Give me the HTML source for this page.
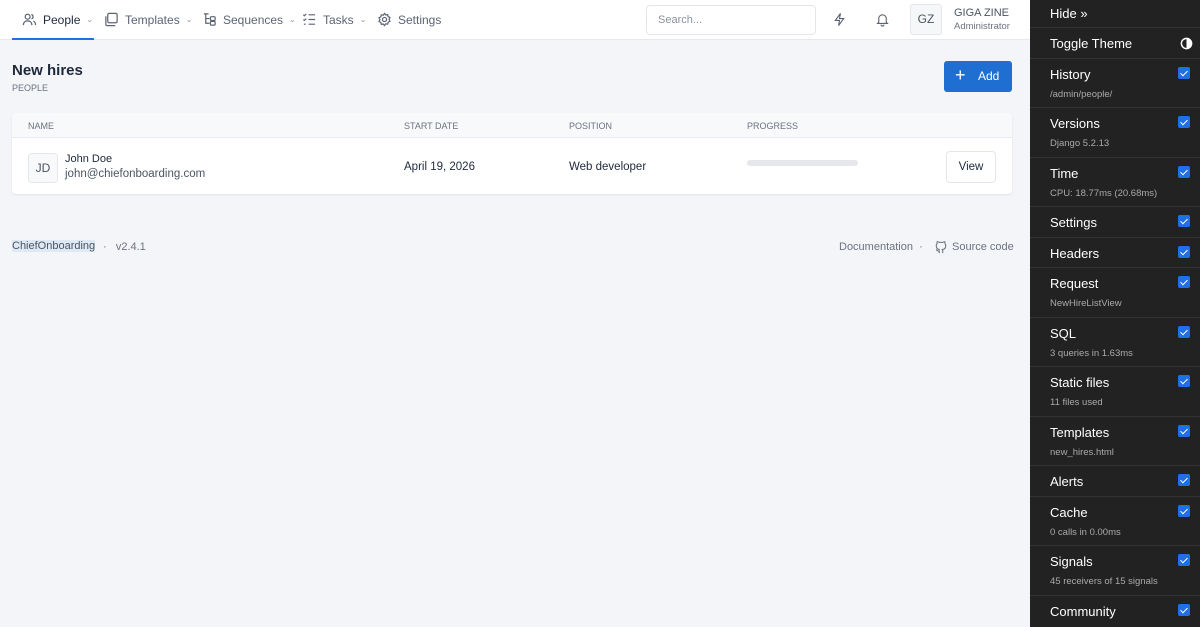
<!DOCTYPE html>
<html><head><meta charset="utf-8"><style>
*{box-sizing:border-box;margin:0;padding:0}
body{width:1200px;height:627px;overflow:hidden;background:#f4f5f9;font-family:"Liberation Sans",sans-serif;position:relative;color:#1e293b}
.nav{position:absolute;left:0;top:0;width:1030px;height:40px;background:#fff;border-bottom:1px solid #e6e8ee}
.ni{position:absolute;top:12px;font-size:12px;color:#5b6473;display:flex;align-items:center;gap:6px}
.ni svg{width:15px;height:15px;stroke:#5b6473;fill:none;stroke-width:1.3}
.car{font-size:8px;color:#8a93a0}
.abs{position:absolute}
.side{position:absolute;left:1030px;top:0;width:170px;height:627px;background:#222}
.row{position:absolute;left:0;width:170px;border-bottom:1px solid #333;color:#fff;font-size:13px}
.row .t{position:absolute;left:20px}
.row .s{position:absolute;left:20px;font-size:9.5px;color:#aaa}
.cb{position:absolute;right:10px;width:12px;height:12px;background:#1f6fe6;border-radius:2px}
.cb:after{content:"";position:absolute;left:3.5px;top:1.5px;width:3px;height:6px;border:solid #fff;border-width:0 1.6px 1.6px 0;transform:rotate(45deg)}
</style></head><body>
<div class="nav">
 <div class="ni" style="left:22px;color:#1e293b"><svg viewBox="0 0 16 16"><circle cx="6" cy="5" r="2.6"/><path d="M1.5 14c0-3 2-4.5 4.5-4.5S10.5 11 10.5 14M10 2.6a2.5 2.5 0 010 4.8M12 9.8c1.6.5 2.5 2 2.5 4.2"/></svg>People <span class="car">⌄</span></div>
 <div class="abs" style="left:12px;top:38px;width:82px;height:2px;background:#1f6fe6"></div>
 <div class="ni" style="left:104px"><svg viewBox="0 0 16 16"><rect x="4" y="1.5" width="10" height="10" rx="1.5"/><path d="M2 4.5v8.5a1.5 1.5 0 001.5 1.5H12"/></svg>Templates <span class="car">⌄</span></div>
 <div class="ni" style="left:202px"><svg viewBox="0 0 16 16"><path d="M2 2h5M4 2v10h4M4 7h4"/><rect x="9" y="5" width="5" height="4" rx="1"/><rect x="9" y="10" width="5" height="4" rx="1"/></svg>Sequences <span class="car">⌄</span></div>
 <div class="ni" style="left:302px"><svg viewBox="0 0 16 16"><path d="M1.5 3l1 1 2-2M1.5 8l1 1 2-2M2 13h2M7 3h7M7 8h7M7 13h7"/></svg>Tasks <span class="car">⌄</span></div>
 <div class="ni" style="left:377px"><svg viewBox="0 0 16 16"><circle cx="8" cy="8" r="2.2"/><path d="M8 1.5l1.3 1.7 2.1-.4.5 2.1 1.9 1-.9 2 .9 2-1.9 1-.5 2.1-2.1-.4L8 14.5l-1.3-1.7-2.1.4-.5-2.1-1.9-1 .9-2-.9-2 1.9-1 .5-2.1 2.1.4z"/></svg>Settings</div>
 <div class="abs" style="left:646px;top:5px;width:170px;height:30px;border:1px solid #e3e6eb;border-radius:4px;font-size:11px;color:#8a93a0;padding:8px 11px">Search...</div>
 <svg class="abs" style="left:832px;top:12px" width="15" height="15" viewBox="0 0 16 16" fill="none" stroke="#5b6473" stroke-width="1.2"><path d="M9 1.5L3.5 9h4.5l-1 5.5L12.5 7H8z"/></svg>
 <svg class="abs" style="left:875px;top:12px" width="15" height="15" viewBox="0 0 16 16" fill="none" stroke="#5b6473" stroke-width="1.2"><path d="M4 11V7a4 4 0 018 0v4l1.2 1.2H2.8zM6.5 13.5a1.5 1.5 0 003 0"/></svg>
 <div class="abs" style="left:910px;top:4px;width:32px;height:31px;border:1px solid #e3e6eb;border-radius:3px;background:#f6f7f9;font-size:12px;color:#4b5563;text-align:center;line-height:29px">GZ</div>
 <div class="abs" style="left:954px;top:7px;font-size:11px;color:#4b5563">GIGA ZINE</div>
 <div class="abs" style="left:954px;top:21px;font-size:9.5px;color:#6b7280">Administrator</div>
</div>
<div class="abs" style="left:12px;top:62px;font-size:15px;font-weight:bold;color:#1e293b">New hires</div>
<div class="abs" style="left:12px;top:83px;font-size:9px;color:#6b7280">PEOPLE</div>
<div class="abs" style="left:944px;top:61px;width:68px;height:31px;background:#1f6fd2;border-radius:3px;color:#fff;font-size:12px;line-height:31px"><span style="position:absolute;left:11px;font-size:18px;top:-1px">+</span><span style="position:absolute;left:34px">Add</span></div>
<div class="abs" style="left:12px;top:113px;width:1000px;height:81px;background:#fff;border-radius:4px;box-shadow:0 1px 2px rgba(0,0,0,.08)">
 <div class="abs" style="left:0;top:0;width:1000px;height:25px;background:#f8f9fb;border-bottom:1px solid #e9ecf0;border-radius:4px 4px 0 0;font-size:9px;color:#6b7280">
  <span class="abs" style="left:16px;top:8px">NAME</span><span class="abs" style="left:392px;top:8px">START DATE</span><span class="abs" style="left:557px;top:8px">POSITION</span><span class="abs" style="left:735px;top:8px">PROGRESS</span></div>
 <div class="abs" style="left:16px;top:40px;width:30px;height:30px;border:1px solid #e3e6eb;border-radius:4px;background:#f8f9fb;font-size:12px;color:#4b5563;text-align:center;line-height:28px">JD</div>
 <div class="abs" style="left:53px;top:40px;font-size:11px;color:#1e293b">John Doe</div>
 <div class="abs" style="left:53px;top:55px;font-size:11.5px;color:#4b5563">john@chiefonboarding.com</div>
 <div class="abs" style="left:392px;top:48px;font-size:11.5px">April 19, 2026</div>
 <div class="abs" style="left:557px;top:48px;font-size:11.5px">Web developer</div>
 <div class="abs" style="left:735px;top:47px;width:111px;height:6px;background:#e5e7eb;border-radius:3px"></div>
 <div class="abs" style="left:934px;top:38px;width:50px;height:32px;border:1px solid #e3e6eb;border-radius:4px;font-size:11.5px;text-align:center;line-height:30px">View</div>
</div>
<div class="abs" style="left:12px;top:240px;font-size:11px;color:#4b5563;background:#dfe9f5">ChiefOnboarding</div>
<div class="abs" style="left:103px;top:241px;font-size:11px;color:#6b7280">·&nbsp;&nbsp; v2.4.1</div>
<div class="abs" style="left:839px;top:241px;font-size:11px;color:#6b7280">Documentation &nbsp;·</div>
<svg class="abs" style="left:934px;top:240px" width="14" height="14" viewBox="0 0 16 16" fill="none" stroke="#6b7280" stroke-width="1.2"><path d="M6 15v-2.5c-2.5.6-3-1-3.5-1.8M10 15v-2.5c0-.8-.2-1.2-.6-1.6 2-.2 4-1 4-4.4 0-.9-.3-1.7-.9-2.3.1-.5.2-1.4-.1-2.3 0 0-.8-.2-2.4.9a8 8 0 00-4 0C4.4 1.7 3.6 1.9 3.6 1.9c-.3.9-.2 1.8-.1 2.3-.6.6-.9 1.4-.9 2.3 0 3.4 2 4.2 4 4.4"/></svg>
<div class="abs" style="left:952px;top:241px;font-size:11px;color:#6b7280">Source code</div>
<div class="side">
 <div class="row" style="top:0;height:28px"><span class="t" style="top:6px">Hide »</span></div>
 <div class="row" style="top:28px;height:31px"><span class="t" style="top:8px">Toggle Theme</span><svg class="abs" style="right:7px;top:9px" width="13" height="13" viewBox="0 0 14 14"><circle cx="7" cy="7" r="5.5" fill="none" stroke="#fff" stroke-width="1.6"/><path d="M7 1.5a5.5 5.5 0 010 11z" fill="#fff"/></svg></div>
 <div class="row" style="top:59px;height:49px"><span class="t" style="top:8px">History</span><span class="s" style="top:30px">/admin/people/</span><span class="cb" style="top:8px"></span></div>
 <div class="row" style="top:108px;height:50px"><span class="t" style="top:8px">Versions</span><span class="s" style="top:30px">Django 5.2.13</span><span class="cb" style="top:8px"></span></div>
 <div class="row" style="top:158px;height:49px"><span class="t" style="top:8px">Time</span><span class="s" style="top:30px">CPU: 18.77ms (20.68ms)</span><span class="cb" style="top:8px"></span></div>
 <div class="row" style="top:207px;height:31px"><span class="t" style="top:8px">Settings</span><span class="cb" style="top:8px"></span></div>
 <div class="row" style="top:238px;height:30px"><span class="t" style="top:8px">Headers</span><span class="cb" style="top:8px"></span></div>
 <div class="row" style="top:268px;height:50px"><span class="t" style="top:8px">Request</span><span class="s" style="top:30px">NewHireListView</span><span class="cb" style="top:8px"></span></div>
 <div class="row" style="top:318px;height:49px"><span class="t" style="top:8px">SQL</span><span class="s" style="top:30px">3 queries in 1.63ms</span><span class="cb" style="top:8px"></span></div>
 <div class="row" style="top:367px;height:50px"><span class="t" style="top:8px">Static files</span><span class="s" style="top:30px">11 files used</span><span class="cb" style="top:8px"></span></div>
 <div class="row" style="top:417px;height:49px"><span class="t" style="top:8px">Templates</span><span class="s" style="top:30px">new_hires.html</span><span class="cb" style="top:8px"></span></div>
 <div class="row" style="top:466px;height:31px"><span class="t" style="top:8px">Alerts</span><span class="cb" style="top:8px"></span></div>
 <div class="row" style="top:497px;height:49px"><span class="t" style="top:8px">Cache</span><span class="s" style="top:30px">0 calls in 0.00ms</span><span class="cb" style="top:8px"></span></div>
 <div class="row" style="top:546px;height:50px"><span class="t" style="top:8px">Signals</span><span class="s" style="top:30px">45 receivers of 15 signals</span><span class="cb" style="top:8px"></span></div>
 <div class="row" style="top:596px;height:31px;border:0"><span class="t" style="top:8px">Community</span><span class="cb" style="top:8px"></span></div>
</div>
</body></html>
